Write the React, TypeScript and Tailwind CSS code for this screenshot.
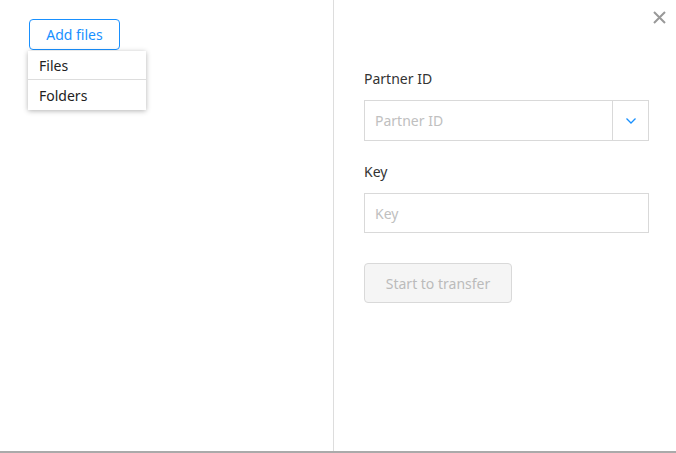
import React from 'react'

const App = () => {
  return (
    <div
      className="w-[676px] h-[453px] flex bg-white border-b-2 border-[#aaaaaa] text-[14px] text-[#333]"
      style={{ fontFamily: '"Noto Sans", "Open Sans", sans-serif' }}
    >
      <div className="w-[334px] border-r border-[#dddddd] relative pt-[19px] pl-[29px]">
        <button className="h-[31px] w-[91px] rounded border border-[#1890ff] text-[#1890ff] text-[14px] leading-none">
          Add files
        </button>
        <div className="absolute left-[28px] top-[51px] w-[118px] bg-white shadow-[0_1px_5px_rgba(0,0,0,0.3)]">
          <div className="h-[29px] px-[11px] flex items-center border-b border-[#dddddd] text-[#222]">Files</div>
          <div className="h-[30px] px-[11px] flex items-center text-[#222]">Folders</div>
        </div>
      </div>
      <div className="flex-1 relative pl-[30px] pr-[27px] pt-[68px]">
        <button className="absolute right-[9px] top-[9px] w-[16px] h-[16px] flex items-center justify-center text-[#999]">
          <svg width="13" height="13" viewBox="0 0 13 13" fill="none" stroke="currentColor" strokeWidth="2">
            <path d="M1 1L12 12M12 1L1 12" />
          </svg>
        </button>
        <div className="h-[22px] leading-[22px]">Partner ID</div>
        <div className="mt-[10px] h-[41px] flex border border-[#d9d9d9]">
          <div className="flex-1 flex items-center px-[10px] text-[#c0c0c0]">Partner ID</div>
          <div className="w-[36px] border-l border-[#d9d9d9] flex items-center justify-center text-[#1890ff]">
            <svg width="12" height="8" viewBox="0 0 12 8" fill="none" stroke="currentColor" strokeWidth="1.3">
              <path d="M1.5 1.5L6 6L10.5 1.5" />
            </svg>
          </div>
        </div>
        <div className="mt-[20px] h-[22px] leading-[22px]">Key</div>
        <div className="mt-[10px] h-[40px] border border-[#d9d9d9] flex items-center px-[10px] text-[#c0c0c0]">Key</div>
        <button className="mt-[30px] h-[40px] w-[148px] rounded border border-[#d9d9d9] bg-[#f5f5f5] text-[#bbbbbb] text-[14px]">
          Start to transfer
        </button>
      </div>
    </div>
  )
}

export default App
